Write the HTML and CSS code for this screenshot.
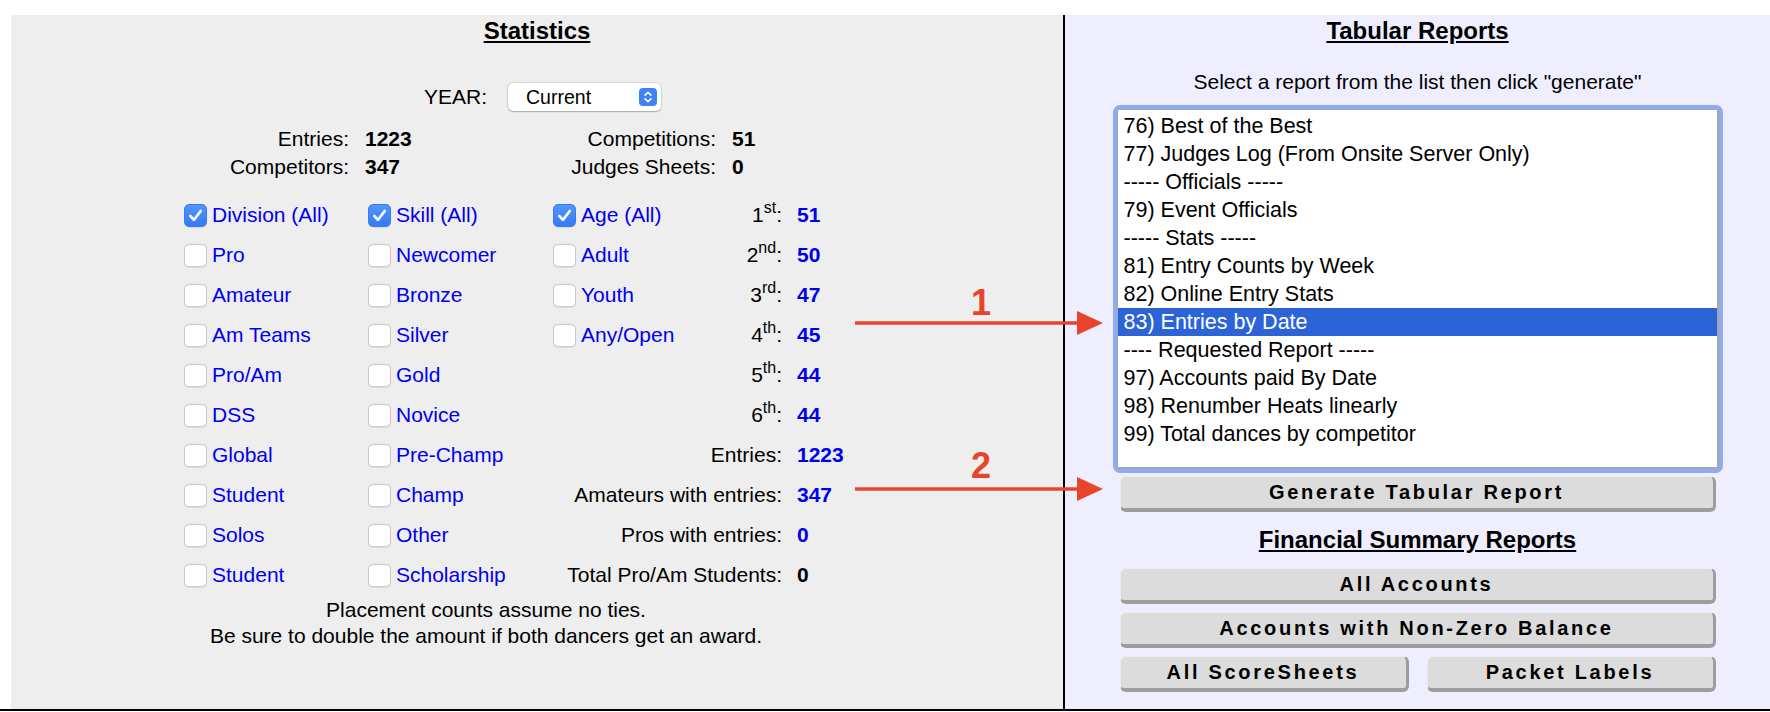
FILE: index.html
```html
<!DOCTYPE html>
<html>
<head>
<meta charset="utf-8">
<link rel="stylesheet" href="styles.css">
</head>
<body>
<div class="page">
  <section class="stats">
    <h2 class="title">Statistics</h2>
    <div class="year-row">
      <span class="year-label">YEAR:</span>
      <div class="select">
        <span class="select-text">Current</span>
        <span class="stepper">
          <svg width="18" height="18" viewBox="0 0 18 18"><rect width="18" height="18" rx="4" fill="#3f83f6"/><path d="M6 7.2 L9 4.4 L12 7.2 M6 10.8 L9 13.6 L12 10.8" fill="none" stroke="#fff" stroke-width="1.6" stroke-linecap="round" stroke-linejoin="round"/></svg>
        </span>
      </div>
    </div>
    <div class="counts">
      <span class="lbl">Entries:</span><span class="val">1223</span><span class="lbl">Competitions:</span><span class="val">51</span>
      <span class="lbl">Competitors:</span><span class="val">347</span><span class="lbl">Judges Sheets:</span><span class="val">0</span>
    </div>
    <div class="filters">
      <label class="opt"><span class="cb on"><svg viewBox="0 0 24 24"><path d="M6 12.5 L10.2 17 L18 6.8" fill="none" stroke="#fff" stroke-width="3" stroke-linecap="round" stroke-linejoin="round"/></svg></span>Division (All)</label>
      <label class="opt"><span class="cb on"><svg viewBox="0 0 24 24"><path d="M6 12.5 L10.2 17 L18 6.8" fill="none" stroke="#fff" stroke-width="3" stroke-linecap="round" stroke-linejoin="round"/></svg></span>Skill (All)</label>
      <label class="opt"><span class="cb on"><svg viewBox="0 0 24 24"><path d="M6 12.5 L10.2 17 L18 6.8" fill="none" stroke="#fff" stroke-width="3" stroke-linecap="round" stroke-linejoin="round"/></svg></span>Age (All)</label>
      <span class="place">1<sup>st</sup>:</span><span class="num">51</span>

      <label class="opt"><span class="cb"></span>Pro</label>
      <label class="opt"><span class="cb"></span>Newcomer</label>
      <label class="opt"><span class="cb"></span>Adult</label>
      <span class="place">2<sup>nd</sup>:</span><span class="num">50</span>

      <label class="opt"><span class="cb"></span>Amateur</label>
      <label class="opt"><span class="cb"></span>Bronze</label>
      <label class="opt"><span class="cb"></span>Youth</label>
      <span class="place">3<sup>rd</sup>:</span><span class="num">47</span>

      <label class="opt"><span class="cb"></span>Am Teams</label>
      <label class="opt"><span class="cb"></span>Silver</label>
      <label class="opt"><span class="cb"></span>Any/Open</label>
      <span class="place">4<sup>th</sup>:</span><span class="num">45</span>

      <label class="opt"><span class="cb"></span>Pro/Am</label>
      <label class="opt"><span class="cb"></span>Gold</label>
      <span class="place wide">5<sup>th</sup>:</span><span class="num">44</span>

      <label class="opt"><span class="cb"></span>DSS</label>
      <label class="opt"><span class="cb"></span>Novice</label>
      <span class="place wide">6<sup>th</sup>:</span><span class="num">44</span>

      <label class="opt"><span class="cb"></span>Global</label>
      <label class="opt"><span class="cb"></span>Pre-Champ</label>
      <span class="place wide">Entries:</span><span class="num">1223</span>

      <label class="opt"><span class="cb"></span>Student</label>
      <label class="opt"><span class="cb"></span>Champ</label>
      <span class="place wide">Amateurs with entries:</span><span class="num">347</span>

      <label class="opt"><span class="cb"></span>Solos</label>
      <label class="opt"><span class="cb"></span>Other</label>
      <span class="place wide">Pros with entries:</span><span class="num">0</span>

      <label class="opt"><span class="cb"></span>Student</label>
      <label class="opt"><span class="cb"></span>Scholarship</label>
      <span class="place wide">Total Pro/Am Students:</span><span class="num black">0</span>
    </div>
    <div class="notes">
      <p>Placement counts assume no ties.</p>
      <p>Be sure to double the amount if both dancers get an award.</p>
    </div>
  </section>

  <section class="reports">
    <h2 class="title">Tabular Reports</h2>
    <p class="hint">Select a report from the list then click "generate"</p>
    <div class="listbox">
      <div class="list">
        <div class="item">76) Best of the Best</div>
        <div class="item">77) Judges Log (From Onsite Server Only)</div>
        <div class="item">----- Officials -----</div>
        <div class="item">79) Event Officials</div>
        <div class="item">----- Stats -----</div>
        <div class="item">81) Entry Counts by Week</div>
        <div class="item">82) Online Entry Stats</div>
        <div class="item sel">83) Entries by Date</div>
        <div class="item">---- Requested Report -----</div>
        <div class="item">97) Accounts paid By Date</div>
        <div class="item">98) Renumber Heats linearly</div>
        <div class="item">99) Total dances by competitor</div>
      </div>
    </div>
    <button class="btn gen">Generate Tabular Report</button>
    <h2 class="title fin">Financial Summary Reports</h2>
    <button class="btn first">All Accounts</button>
    <button class="btn">Accounts with Non-Zero Balance</button>
    <div class="btn-pair">
      <button class="btn half">All ScoreSheets</button>
      <button class="btn half">Packet Labels</button>
    </div>
  </section>

  <span class="callout n1">1</span>
  <svg class="arrow a1" width="248" height="28" viewBox="0 0 248 28"><line x1="0" y1="14" x2="226" y2="14" stroke="#e8442b" stroke-width="3.5"/><polygon points="222,2 248,14 222,26" fill="#e8442b"/></svg>
  <span class="callout n2">2</span>
  <svg class="arrow a2" width="248" height="28" viewBox="0 0 248 28"><line x1="0" y1="14" x2="226" y2="14" stroke="#e8442b" stroke-width="3.5"/><polygon points="222,2 248,14 222,26" fill="#e8442b"/></svg>
</div>
<div class="rule"></div>
</body>
</html>
```

FILE: styles.css
```css
* { box-sizing: border-box; }
html, body { margin: 0; padding: 0; background: #fff; }
body {
  font-family: "Liberation Sans", Arial, Helvetica, sans-serif;
  font-size: 21px;
  color: #000;
  width: 1770px;
  height: 712px;
  overflow: hidden;
}
p { margin: 0; }

.page {
  position: relative;
  display: flex;
  margin: 15px 0 0 11px;
  height: 694px;
}

.stats {
  width: 1054px;
  background: #eeeeee;
  border-right: 2px solid #000;
  padding-top: 2px;
}
.reports {
  flex: 1;
  background: #eeeeff;
  padding-top: 2px;
}
.rule { height: 2px; background: #000; }

.title {
  margin: 0;
  font-size: 24px;
  line-height: 28px;
  font-weight: bold;
  text-decoration: underline;
  text-align: center;
}

/* YEAR */
.year-row {
  display: flex;
  align-items: center;
  gap: 21px;
  height: 29px;
  margin-top: 37px;
  padding-left: 413px;
}
.select {
  width: 153px;
  height: 28px;
  background: #fff;
  border-radius: 5px;
  box-shadow: 0 0 0 0.5px rgba(0,0,0,0.18), 0 1px 1.5px rgba(0,0,0,0.22);
  display: flex;
  align-items: center;
  justify-content: space-between;
  padding: 1px 4px 0 18px;
  font-size: 19.5px;
}
.stepper { display: flex; }

/* counts */
.counts {
  display: grid;
  grid-template-columns: 165px 160px 207px auto;
  line-height: 28px;
  margin: 14px 0 0 173px;
}
.counts .lbl { text-align: right; }
.counts .val { font-weight: bold; padding-left: 16px; }

/* filters */
.filters {
  display: grid;
  grid-template-columns: 184px 185px 150px 79px auto;
  grid-auto-rows: 40px;
  align-items: center;
  margin: 14px 0 0 173px;
}
.opt {
  display: flex;
  align-items: center;
  color: #0000ee;
  white-space: nowrap;
}
.cb {
  flex: none;
  width: 23px;
  height: 23px;
  margin-right: 5px;
  background: #fff;
  border: 1px solid #c9c9c9;
  border-radius: 5px;
  box-shadow: 0 0.5px 1px rgba(0,0,0,0.08);
}
.cb.on {
  background: linear-gradient(#5096fa, #3579f6);
  border-color: #3a7ce8;
}
.cb svg { display: block; width: 21px; height: 21px; }
.place { text-align: right; white-space: nowrap; }
.place.wide { grid-column: 3 / 5; }
.place sup { font-size: 16px; line-height: 0; vertical-align: 9px; }
.num { font-weight: bold; color: #0000ee; padding-left: 15px; }
.num.black { color: #000; }

.notes {
  margin: 2px 0 0 173px;
  width: 604px;
  text-align: center;
  line-height: 26px;
}

/* reports */
.hint {
  text-align: center;
  line-height: 26px;
  margin-top: 24px;
}
.listbox {
  width: 610px;
  margin: 10px auto 0;
  border: 4px solid #8fabf3;
  border-radius: 7px;
}
.list {
  height: 360px;
  background: #fff;
  border-style: solid;
  border-color: #a6a6a6;
  border-width: 1px 2px 2px 1px;
  padding-top: 2px;
}
.item {
  height: 28px;
  line-height: 28px;
  padding-left: 6px;
  font-size: 21.5px;
  white-space: nowrap;
}
.item.sel { background: #2c64d8; color: #fff; }

.btn {
  display: flex;
  align-items: center;
  justify-content: center;
  width: 596px;
  height: 36px;
  margin: 8px auto 0;
  padding: 0 0 1px;
  background: #dcdcdc;
  border: 1px solid #ececec;
  border-right: 3px solid #9d9d9d;
  border-bottom: 4px solid #9d9d9d;
  border-radius: 6px;
  font-family: "Liberation Sans", Arial, sans-serif;
  font-weight: bold;
  font-size: 20px;
  letter-spacing: 2.7px;
  color: #000;
}
.btn.gen { margin-top: 3px; }
.title.fin { margin-top: 14px; }
.btn.first { margin-top: 14px; }
.btn-pair {
  display: flex;
  gap: 18px;
  width: 596px;
  margin: 8px auto 0;
}
.btn.half { flex: 1; width: auto; margin: 0; }

/* annotations */
.callout {
  position: absolute;
  font-size: 36px;
  line-height: 36px;
  font-weight: bold;
  color: #e8442b;
}
.n1 { left: 960px; top: 270px; }
.n2 { left: 960px; top: 433px; }
.arrow { position: absolute; left: 844px; }
.a1 { top: 294px; }
.a2 { top: 460px; }
```
